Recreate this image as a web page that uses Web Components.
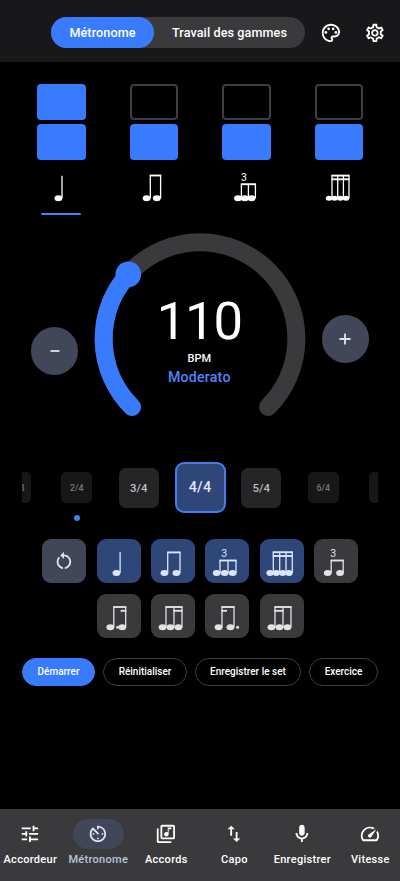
<!DOCTYPE html>
<html lang="fr">
<head>
<meta charset="utf-8">
<title>Métronome</title>
<style>
html,body{margin:0;background:#000;overflow:hidden}
body{font-family:Roboto,"Liberation Sans",sans-serif;font-weight:500;color:#fff;--blue:#387bff;--surface:#3a3a3c;--tonal:#414659}
</style>
</head>
<body>
<metronome-app></metronome-app>
<script>
const ICONS = {
  palette:'<path d="M12 22C6.49 22 2 17.51 2 12S6.49 2 12 2s10 4.04 10 9c0 3.31-2.69 6-6 6h-1.77c-.28 0-.5.22-.5.5 0 .12.05.23.13.33.41.47.64 1.06.64 1.67A2.5 2.5 0 0 1 12 22zm0-18c-4.41 0-8 3.59-8 8s3.59 8 8 8c.28 0 .5-.22.5-.5a.54.54 0 0 0-.14-.35c-.41-.46-.63-1.05-.63-1.65a2.5 2.5 0 0 1 2.5-2.5H16c2.21 0 4-1.79 4-4 0-3.86-3.59-7-8-7z"/><circle cx="6.5" cy="11.5" r="1.5"/><circle cx="9.5" cy="7.5" r="1.5"/><circle cx="14.5" cy="7.5" r="1.5"/><circle cx="17.5" cy="11.5" r="1.5"/>',
  settings:'<path d="M19.43 12.98c.04-.32.07-.64.07-.98s-.03-.66-.07-.98l2.11-1.65c.19-.15.24-.42.12-.64l-2-3.46a.5.5 0 0 0-.61-.22l-2.49 1c-.52-.4-1.08-.73-1.69-.98l-.38-2.65A.488.488 0 0 0 14 2h-4c-.25 0-.46.18-.49.42l-.38 2.65c-.61.25-1.17.59-1.69.98l-2.49-1a.566.566 0 0 0-.18-.03c-.17 0-.34.09-.43.25l-2 3.46c-.13.22-.07.49.12.64l2.11 1.65c-.04.32-.07.65-.07.98s.03.66.07.98l-2.11 1.65c-.19.15-.24.42-.12.64l2 3.46a.5.5 0 0 0 .61.22l2.49-1c.52.4 1.08.73 1.69.98l.38 2.65c.03.24.24.42.49.42h4c.25 0 .46-.18.49-.42l.38-2.65c.61-.25 1.17-.59 1.69-.98l2.49 1c.06.02.12.03.18.03.17 0 .34-.09.43-.25l2-3.46c.12-.22.07-.49-.12-.64l-2.11-1.65zm-1.98-1.71c.04.31.05.52.05.73s-.02.43-.05.73l-.14 1.13.89.7 1.08.84-.7 1.21-1.27-.51-1.04-.42-.9.68c-.43.32-.84.56-1.25.73l-1.06.43-.16 1.13-.2 1.35h-1.4l-.19-1.35-.16-1.13-1.06-.43c-.43-.18-.83-.41-1.23-.71l-.91-.7-1.06.43-1.27.51-.7-1.21 1.08-.84.89-.7-.14-1.13c-.03-.31-.05-.54-.05-.74s.02-.43.05-.73l.14-1.13-.89-.7-1.08-.84.7-1.21 1.27.51 1.04.42.9-.68c.43-.32.84-.56 1.25-.73l1.06-.43.16-1.13.2-1.35h1.39l.19 1.35.16 1.13 1.06.43c.43.18.83.41 1.23.71l.91.7 1.06-.43 1.27-.51.7 1.21-1.07.85-.89.7.14 1.13zM12 8c-2.21 0-4 1.79-4 4s1.79 4 4 4 4-1.79 4-4-1.79-4-4-4zm0 6c-1.1 0-2-.9-2-2s.9-2 2-2 2 .9 2 2-.9 2-2 2z"/>',
  tune:'<path d="M3 17v2h6v-2H3zM3 5v2h10V5H3zm10 16v-2h8v-2h-8v-2h-2v6h2zM7 9v2H3v2h4v2h2V9H7zm14 4v-2H11v2h10zm-6-4h2V7h4V5h-4V3h-2v6z"/>',
  timer:'<path d="M11 17c0 .55.45 1 1 1s1-.45 1-1-.45-1-1-1-1 .45-1 1zm0-14v4h2V5.08c3.39.49 6 3.39 6 6.92 0 3.87-3.13 7-7 7s-7-3.13-7-7c0-1.68.59-3.22 1.58-4.42L12 13l1.41-1.41-6.8-6.8v.02C4.42 6.45 3 9.05 3 12c0 4.97 4.02 9 9 9 4.97 0 9-4.03 9-9s-4.03-9-9-9h-1zm7 9c0-.55-.45-1-1-1s-1 .45-1 1 .45 1 1 1 1-.45 1-1zM6 12c0 .55.45 1 1 1s1-.45 1-1-.45-1-1-1-1 .45-1 1z"/>',
  library:'<path d="M20 2H8c-1.1 0-2 .9-2 2v12c0 1.1.9 2 2 2h12c1.1 0 2-.9 2-2V4c0-1.1-.9-2-2-2zm0 14H8V4h12v12zm-7.5-1c1.38 0 2.5-1.12 2.5-2.5V7h3V5h-4v5.51c-.42-.32-.93-.51-1.5-.51-1.38 0-2.5 1.12-2.5 2.5s1.12 2.5 2.5 2.5zM4 6H2v14c0 1.1.9 2 2 2h14v-2H4V6z"/>',
  swap:'<path d="M16 17.01V10h-2v7.01h-3L15 21l4-3.99h-3zM9 3L5 6.99h3V14h2V6.99h3L9 3z"/>',
  mic:'<path d="M12 14c1.66 0 3-1.34 3-3V5c0-1.66-1.34-3-3-3S9 3.34 9 5v6c0 1.66 1.34 3 3 3zm5-3c0 2.76-2.24 5-5 5s-5-2.24-5-5H5c0 3.53 2.61 6.43 6 6.92V21h2v-3.08c3.39-.49 6-3.39 6-6.92h-2z"/>',
  speed:'<path d="M20.38 8.57l-1.23 1.85a8 8 0 0 1-.22 7.58H5.07A8 8 0 0 1 15.58 6.85l1.85-1.23A10 10 0 0 0 3.35 19a2 2 0 0 0 1.72 1h13.85a2 2 0 0 0 1.74-1 10 10 0 0 0-.27-10.44zm-9.79 6.84a2 2 0 0 0 2.83 0l5.66-8.49-8.49 5.66a2 2 0 0 0 0 2.83z"/>',
  restart:'<path d="M12 5V2L8 6l4 4V7c3.31 0 6 2.69 6 6 0 2.97-2.17 5.43-5 5.91v2.02c3.95-.49 7-3.85 7-7.93 0-4.42-3.58-8-8-8zM6 13c0-1.65.67-3.15 1.76-4.24L6.34 7.34A8.014 8.014 0 0 0 4 13c0 4.08 3.05 7.44 7 7.93v-2.02c-2.83-.48-5-2.94-5-5.91z"/>'
};

// Rhythm figures on a 44x44 grid: head and stem x positions, beam segments [x1, x2, y].
const NOTES = {
  quarter:{y:34,h:[19.4],s:[23.1],top:13},
  eighths:{y:34,h:[13.4,25.4],s:[16.7,29],top:13.2,b:[[16.7,29,13.4]]},
  triplet:{y:34,h:[11.7,19.7,27.7],s:[15,23,31],top:21.3,b:[[15,31,21.5]],three:[19.2,18]},
  sixteenths:{y:34,rx:3.6,h:[10,16.3,22.7,29],s:[13.3,19.7,26,32.3],top:13,b:[[13.3,32.3,13.2],[13.3,32.3,17]]},
  shuffle:{y:34,h:[13.7,26],s:[17.2,29.2],top:21.3,b:[[17.2,29.2,21.5]],three:[19.3,18]},
  dotted:{y:33.3,h:[13.3,25.3],s:[16.8,28.7],top:12.8,b:[[16.8,28.7,13],[24.2,28.7,16.8]],dot:20.6},
  gallop:{y:33.3,h:[11.6,19.4,27.4],s:[15,23,31],top:12.8,b:[[15,31,13],[23,31,16.8]]},
  snap:{y:33.3,h:[13.6,25.4],s:[17,29],top:12.8,b:[[17,29,13],[17,21.4,16.8]],dot:32.6},
  reverse:{y:33.3,h:[11.4,19.4,27.4],s:[15,23,31],top:12.8,b:[[15,31,13],[15,23,16.8]]},
  'c-quarter':{y:33.3,h:[19.4],s:[23],top:10.7},
  'c-eighths':{y:33.3,h:[14.6,24.8],s:[18.3,28.6],top:10.3,b:[[18.3,28.6,10.5]]},
  'c-triplet':{y:33.3,h:[13,19.8,26.5],s:[16.4,23.4,30.4],top:19,b:[[16.4,30.4,19.2]],three:[19,16.2]},
  'c-sixteenths':{y:33.3,rx:3.2,ry:2.5,h:[12,17.6,23.3,29],s:[15,20.7,26.4,32],top:10.4,b:[[15,32,10.6],[15,32,14.3]]}
};

function define(name, render){
  customElements.define(name, class extends HTMLElement{
    constructor(){ super(); this.attachShadow({mode:'open'}); }
    connectedCallback(){
      const t = document.createElement('template');
      t.innerHTML = render(this);
      this.shadowRoot.replaceChildren(t.content.cloneNode(true));
    }
  });
}

define('md-icon', el => `<style>:host{display:block;width:21.8px;height:21.8px;flex:none}svg{display:block;width:100%;height:100%;fill:currentColor}</style>
<svg viewBox="0 0 24 24">${ICONS[el.getAttribute('name')]}</svg>`);

define('rhythm-note', el => {
  const n = NOTES[el.getAttribute('name')], rx = n.rx || 3.9, ry = n.ry || 3;
  return `<style>:host{display:block;width:44px;height:44px}svg{display:block}text{font:400 10.5px Roboto,sans-serif}</style>
<svg width="44" height="44" fill="currentColor" stroke="currentColor">
${n.h.map(x => `<ellipse cx="${x}" cy="${n.y}" rx="${rx}" ry="${ry}" stroke="none"/>`).join('')}
${n.s.map(x => `<path d="M${x} ${n.top}V${n.y}" stroke-width="1.3"/>`).join('')}
${(n.b || []).map(([a, b, y]) => `<path d="M${a - .6} ${y}H${b + .6}" stroke-width="1.9"/>`).join('')}
${n.dot ? `<circle cx="${n.dot}" cy="${n.y}" r="1.5" stroke="none"/>` : ''}
${n.three ? `<text x="${n.three[0]}" y="${n.three[1]}" text-anchor="middle" stroke="none">3</text>` : ''}
</svg>`;
});

define('top-bar', () => `<style>
:host{display:flex;box-sizing:border-box;height:62px;padding:17px 14px 0 51px;background:#18181a}
.seg{display:flex;width:254px;height:31px;border-radius:16px;background:var(--surface);font-size:12.6px;letter-spacing:.1px}
.seg span{display:flex;align-items:center;justify-content:center;flex:1}
.seg .on{flex:none;width:103px;border-radius:16px;background:var(--blue)}
.icons{display:flex;gap:22.2px;margin-left:15px;padding-top:5px}
</style><div class="seg"><span class="on">Métronome</span><span>Travail des gammes</span></div>
<div class="icons"><md-icon name="palette"></md-icon><md-icon name="settings"></md-icon></div>`);

define('beat-column', el => `<style>
:host{display:flex;flex-direction:column;align-items:center;flex:1}
i{box-sizing:border-box;width:48.6px;height:36px;border-radius:4px;background:var(--blue);margin-bottom:4px}
i.off{background:none;border:2px solid #3d3d42}
rhythm-note{margin-top:1px}
b{width:40px;height:2.6px;border-radius:2px;background:#4a84f0;margin-top:3.5px}
</style><i class="${el.hasAttribute('accent') ? '' : 'off'}"></i><i></i><rhythm-note name="${el.getAttribute('note')}"></rhythm-note>${el.hasAttribute('accent') ? '<b></b>' : ''}`);

define('round-button', () => `<style>
:host{display:flex;align-items:center;justify-content:center;width:47.6px;height:47.6px;border-radius:50%;background:var(--tonal);color:#dde2f9;flex:none}
</style><slot></slot>`);

define('tempo-dial', () => `<style>
:host{display:grid;width:212px;height:212px;flex:none}
:host>*{grid-area:1/1}
svg{display:block}
.read{display:flex;flex-direction:column;align-items:center;padding:57px 1.4px 0 0}
.n{font:400 52.6px/62px Roboto,sans-serif;letter-spacing:-1.2px}
.u{font-size:11px;line-height:14px}
.t{font-size:14.2px;line-height:18px;margin-top:1.5px;color:#4a86f7;letter-spacing:.2px}
</style>
<svg width="212" height="212" viewBox="-106 -106 212 212" fill="none" stroke-width="18" stroke-linecap="round">
<path d="M-68 68A96.4 96.4 0 1 1 68 68" stroke="#3a3a3c"/>
<path d="M-68 68A96.4 96.4 0 0 1 -71.7 -64.6" stroke="#387bff"/><circle cx="-71.7" cy="-64.6" r="12.8" fill="#387bff" stroke="none"/></svg>
<div class="read"><span class="n">110</span><span class="u">BPM</span><span class="t">Moderato</span></div>`);

define('meter-chip', el => `<style>
:host{display:flex;align-items:center;justify-content:center;box-sizing:border-box;flex:none;width:31px;height:31px;border-radius:5px;background:#171718;color:#777779;font-size:8.8px}
:host([size="m"]){width:40px;height:40px;border-radius:7px;background:#252527;color:#bcbcbe;font-size:11.4px}
:host([size="l"]){width:51px;height:51px;border-radius:9px;background:#2f4678;border:2px solid #417fee;color:#e2e8ff;font-size:14.4px;letter-spacing:.2px}
</style><slot></slot>`);

define('meter-strip', () => `<style>
:host{display:flex;flex-direction:column;margin:0 22px;overflow:hidden}
.row{display:flex;align-items:center;justify-content:center;height:52px;gap:30.5px}
.mid{display:flex;align-items:center;gap:15.8px;margin:0 -4px}
b{width:6px;height:6px;border-radius:50%;background:#4180f5;margin:1.5px 0 0 52px}
</style><div class="row"><meter-chip>12/8</meter-chip><meter-chip>2/4</meter-chip>
<div class="mid"><meter-chip size="m">3/4</meter-chip><meter-chip size="l">4/4</meter-chip><meter-chip size="m">5/4</meter-chip></div>
<meter-chip>6/4</meter-chip><meter-chip></meter-chip></div><b></b>`);

define('rhythm-tile', () => `<style>
:host{display:flex;align-items:center;justify-content:center;width:44px;height:44px;border-radius:9px;background:var(--surface);color:#e2e2e4}
:host([on]){background:#2e4678;color:#dbe5ff}
:host([tonal]){background:var(--tonal);color:#dde2f9}
</style><slot></slot>`);

define('pill-button', () => `<style>
:host{display:flex;align-items:center;justify-content:center;box-sizing:border-box;height:28px;border:1px solid #3e3e42;border-radius:14px;font-size:10px;white-space:nowrap}
:host([primary]){background:var(--blue);border-color:var(--blue)}
</style><slot></slot>`);

define('nav-item', el => `<style>
:host{display:flex;flex-direction:column;align-items:center;width:68px;padding-top:10px;font-size:11px;letter-spacing:.3px;white-space:nowrap}
.i{display:flex;align-items:center;justify-content:center;width:51px;height:30px;border-radius:15px}
:host([on]){color:#bcc3e0}:host([on]) .i{background:var(--tonal);color:#dde2f9}
span{line-height:16px;margin-top:3px}
</style><div class="i"><md-icon name="${el.getAttribute('icon')}"></md-icon></div><span><slot></slot></span>`);

define('metronome-app', () => `<style>
:host{display:flex;flex-direction:column;width:400px;height:881px;overflow:hidden;background:#000}
.beats{display:flex;height:149px;padding:22px 14.6px 0 15.2px}
.dial{display:flex;justify-content:space-between;padding:0 30.8px}
.dial round-button:first-child{margin-top:94px}.dial round-button:last-child{margin-top:82px}
meter-strip{margin-top:16.6px}
.tiles{display:flex;flex-wrap:wrap;justify-content:center;gap:10.6px 10.4px;padding:0 36px 0 36.4px;margin-top:17.9px}
.actions{display:grid;grid-template-columns:73px 84px 106px 69px;gap:8px;padding:20.4px 22px 0}
nav{display:flex;height:72px;margin:auto -4.3px 0 -3.7px;background:var(--surface)}
</style>
<top-bar></top-bar>
<div class="beats"><beat-column accent note="c-quarter"></beat-column><beat-column note="c-eighths"></beat-column><beat-column note="c-triplet"></beat-column><beat-column note="c-sixteenths"></beat-column></div>
<div class="dial"><round-button><svg width="12" height="12" stroke="currentColor" stroke-width="1.8"><path d="M1.5 6h9"/></svg></round-button><tempo-dial></tempo-dial><round-button><svg width="12" height="12" stroke="currentColor" stroke-width="1.8"><path d="M.5 6h11M6 .5v11"/></svg></round-button></div>
<meter-strip></meter-strip>
<div class="tiles"><rhythm-tile tonal><md-icon name="restart"></md-icon></rhythm-tile>
${['quarter','eighths','triplet','sixteenths'].map(n => `<rhythm-tile on><rhythm-note name="${n}"></rhythm-note></rhythm-tile>`).join('')}
${['shuffle','dotted','gallop','snap','reverse'].map(n => `<rhythm-tile><rhythm-note name="${n}"></rhythm-note></rhythm-tile>`).join('')}</div>
<div class="actions"><pill-button primary>Démarrer</pill-button><pill-button>Réinitialiser</pill-button><pill-button>Enregistrer le set</pill-button><pill-button>Exercice</pill-button></div>
<nav><nav-item icon="tune">Accordeur</nav-item><nav-item icon="timer" on>Métronome</nav-item><nav-item icon="library">Accords</nav-item><nav-item icon="swap">Capo</nav-item><nav-item icon="mic">Enregistrer</nav-item><nav-item icon="speed">Vitesse</nav-item></nav>`);
</script>
</body>
</html>
